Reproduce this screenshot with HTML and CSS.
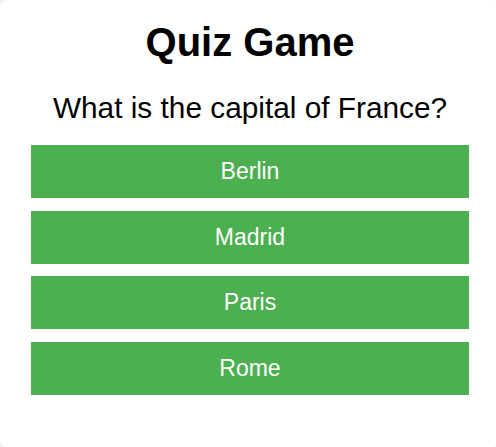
FILE: index.html
```html
<!DOCTYPE html>
<html lang="en">
<head>
<meta charset="utf-8">
<title>Quiz Game</title>
<link rel="stylesheet" href="styles.css">
</head>
<body>
<div class="card">
  <h1 class="title">Quiz Game</h1>
  <p class="question">What is the capital of France?</p>
  <div class="options">
    <button class="option">Berlin</button>
    <button class="option">Madrid</button>
    <button class="option">Paris</button>
    <button class="option">Rome</button>
  </div>
</div>
</body>
</html>
```
FILE: styles.css
```css
html, body {
  margin: 0;
  padding: 0;
  overflow: hidden;
  background: #f2f2f2;
}

body {
  font-family: "Liberation Sans", Arial, sans-serif;
}

.card {
  box-sizing: border-box;
  width: 500px;
  height: 447px;
  background: #ffffff;
  border-radius: 8px;
  padding: 19px 31px 0;
  text-align: center;
}

.title {
  margin: 0;
  font-size: 40px;
  line-height: 1.15;
  font-weight: bold;
  color: #000;
}

.question {
  margin: 25.6px 0 0;
  font-size: 29.8px;
  line-height: 1.15;
  color: #000;
}

.options {
  margin-top: 20.2px;
  display: flex;
  flex-direction: column;
  gap: 12.67px;
}

.option {
  display: block;
  width: 100%;
  border: none;
  border-radius: 0;
  margin: 0;
  padding: 13.25px 0;
  background: #4caf50;
  color: #ffffff;
  font-family: "Liberation Sans", Arial, sans-serif;
  font-size: 23px;
  line-height: 1.15;
  cursor: pointer;
}
```
